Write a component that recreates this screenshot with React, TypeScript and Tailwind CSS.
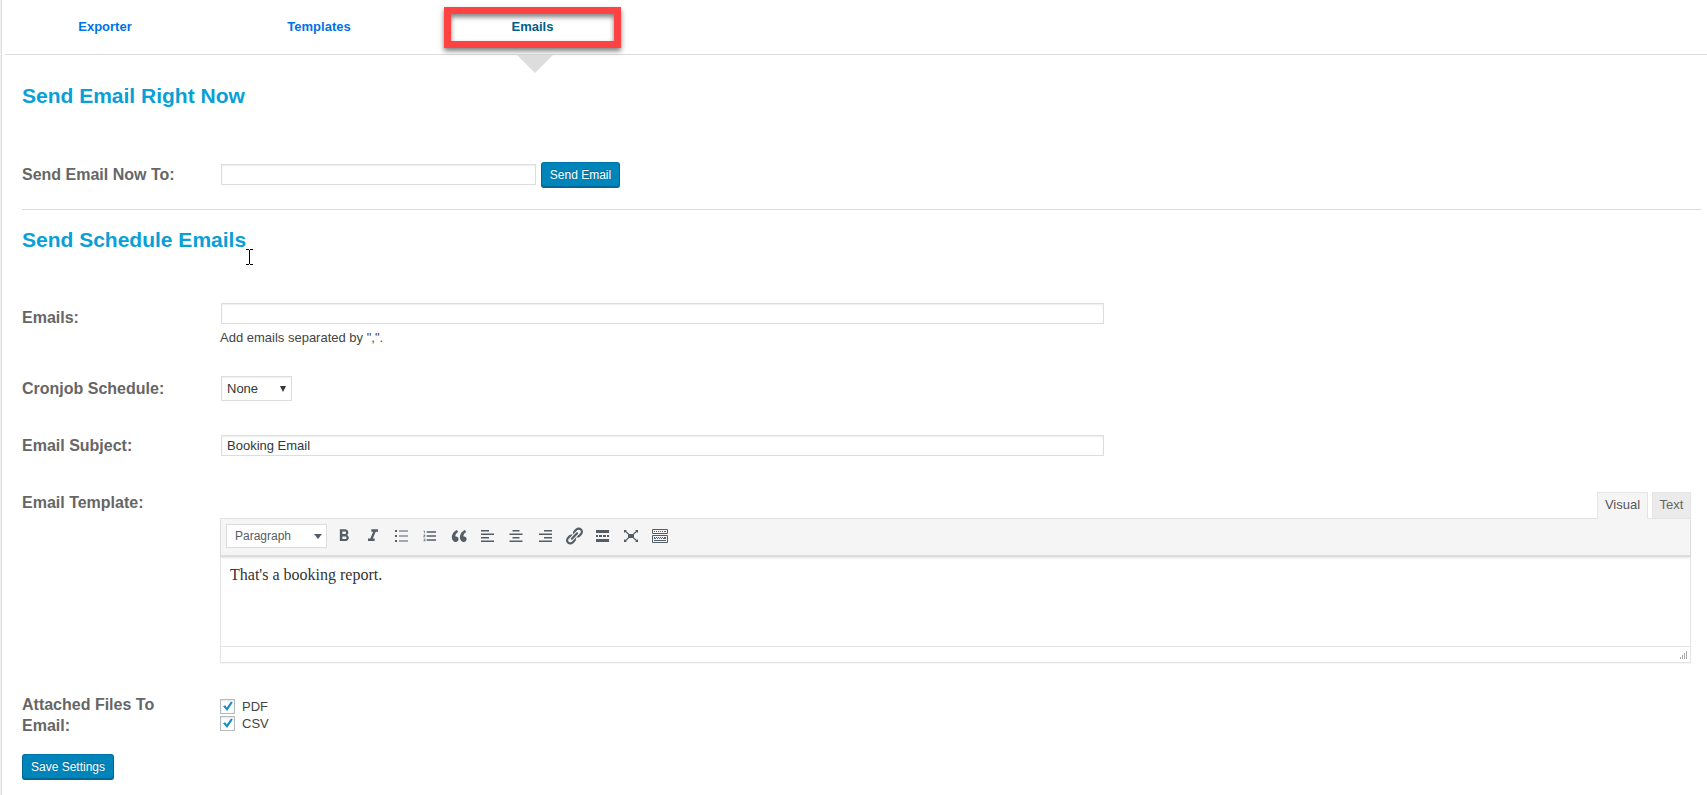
import type { ReactNode } from "react";
import clsx from "clsx";
import { MdFormatBold, MdFormatItalic, MdFormatListNumbered } from "react-icons/md";

const TABS = ["Exporter", "Templates", "Emails"];
const ACTIVE_TAB = "Emails";

const inputClass =
  "h-[21px] border border-[#ddd] bg-white px-[5px] text-[13px] text-[#32373c] shadow-[inset_0_1px_2px_rgba(0,0,0,0.07)] outline-none";

const buttonClass =
  "h-[26px] rounded-[3px] border border-[#006799] border-t-[#0073aa] bg-[#0085ba] text-xs text-white shadow-[inset_0_-1px_0_#006799] [text-shadow:0_-1px_1px_#006799]";

/* ---------- Toolbar icons ---------- */

function Icon({ children }: { children: ReactNode }) {
  return (
    <svg viewBox="0 0 20 20" className="size-5" fill="currentColor" aria-hidden="true">
      {children}
    </svg>
  );
}

function BulletsIcon() {
  return (
    <Icon>
      <path d="M4 4h2v2H4zM4 9h2v2H4zM4 14h2v2H4z" />
      <path d="M8 4.5h9v1H8zM8 9.5h9v1H8zM8 14.5h9v1H8z" />
    </Icon>
  );
}

function QuoteIcon() {
  return (
    <Icon>
      <path d="M9.49 13.22c0-.74-.2-1.38-.61-1.9-.62-.78-1.83-.88-2.53-.72-.29-1.65 1.11-3.75 2.92-4.65L7.88 4c-2.73 1.3-5.42 4.28-4.96 8.05C3.21 14.43 4.59 16 6.54 16c.85 0 1.56-.25 2.12-.75s.83-1.18.83-2.03zm8.05 0c0-.74-.2-1.38-.61-1.9-.63-.78-1.83-.88-2.53-.72-.29-1.65 1.11-3.75 2.92-4.65L15.93 4c-2.73 1.3-5.41 4.28-4.95 8.05.29 2.38 1.66 3.95 3.61 3.95.85 0 1.56-.25 2.12-.75s.83-1.18.83-2.03z" />
    </Icon>
  );
}

function AlignLeftIcon() {
  return (
    <Icon>
      <path d="M3 4h8v1.4H3zM3 7.5h13v1.4H3zM3 11h8v1.4H3zM3 14.6h13V16H3z" />
    </Icon>
  );
}

function AlignCenterIcon() {
  return (
    <Icon>
      <path d="M6.5 4h7v1.4h-7zM3.5 7.5h13v1.4h-13zM6.5 11h7v1.4h-7zM3.5 14.6h13V16h-13z" />
    </Icon>
  );
}

function AlignRightIcon() {
  return (
    <Icon>
      <path d="M9 4h8v1.4H9zM4 7.5h13v1.4H4zM9 11h8v1.4H9zM4 14.6h13V16H4z" />
    </Icon>
  );
}

function LinkIcon() {
  return (
    <Icon>
      <path d="M17.74 2.76c1.68 1.69 1.68 4.41 0 6.1l-1.53 1.52c-1.12 1.12-2.7 1.47-4.14 1.09l2.62-2.61.76-.77.76-.76c.84-.84.84-2.2 0-3.04-.84-.85-2.2-.85-3.04 0l-.77.76-3.38 3.38c-.37-1.44-.02-3.02 1.1-4.14l1.52-1.53c1.69-1.68 4.42-1.68 6.1 0zM8.59 13.43l5.34-5.34c.42-.42.42-1.1 0-1.52-.44-.43-1.13-.39-1.53 0l-5.33 5.34c-.42.42-.42 1.1 0 1.52.44.43 1.13.39 1.52 0zm-.76 2.29l4.14-4.15c.38 1.44.03 3.02-1.09 4.14l-1.52 1.53c-1.69 1.68-4.41 1.68-6.1 0-1.68-1.68-1.68-4.42 0-6.1l1.53-1.52c1.12-1.12 2.7-1.47 4.14-1.1l-4.14 4.15c-.85.84-.85 2.2 0 3.05.84.84 2.2.84 3.04 0z" />
    </Icon>
  );
}

function ReadMoreIcon() {
  return (
    <Icon>
      <path d="M4 4h13v3H4zM4 13h13v3H4z" />
      <path d="M4 9h2v2H4zM7 9h3v2H7zM11 9h3v2h-3zM15 9h2v2h-2z" />
    </Icon>
  );
}

function ExpandIcon() {
  return (
    <Icon>
      <path d="M7 8h6v4H7z" />
      <path
        d="M4 5l3.5 3M16 5l-3.5 3M4 15l3.5-3M16 15l-3.5-3"
        fill="none"
        stroke="currentColor"
        strokeWidth="1.2"
      />
      <path d="M3 4h3L3 7zM17 4h-3l3 3zM3 16h3l-3-3zM17 16h-3l3-3z" />
    </Icon>
  );
}

function KeyboardIcon() {
  return (
    <Icon>
      <path
        d="M2.5 3.5h15v4h-15zM2.5 9.5h15v7h-15z"
        fill="none"
        stroke="currentColor"
      />
      <path d="M4 5h1v1H4zM6 5h1v1H6zM8 5h1v1H8zM10 5h1v1h-1zM12 5h1v1h-1zM14 5h2v1h-2z" />
      <path d="M4 11h1v1H4zM6 11h1v1H6zM8 11h1v1H8zM10 11h1v1h-1zM12 11h1v1h-1zM14 11h2v1h-2z" />
      <path d="M4 12h2v1H4zM7 12h1v1H7zM9 12h1v1H9zM11 12h1v1h-1zM13 12h3v1h-3zM4 14h12v1H4z" />
    </Icon>
  );
}

const TOOLS: { label: string; icon: ReactNode }[] = [
  { label: "Bold", icon: <MdFormatBold className="size-5" /> },
  { label: "Italic", icon: <MdFormatItalic className="size-5" /> },
  { label: "Bulleted list", icon: <BulletsIcon /> },
  { label: "Numbered list", icon: <MdFormatListNumbered className="size-4" /> },
  { label: "Blockquote", icon: <QuoteIcon /> },
  { label: "Align left", icon: <AlignLeftIcon /> },
  { label: "Align center", icon: <AlignCenterIcon /> },
  { label: "Align right", icon: <AlignRightIcon /> },
  { label: "Insert link", icon: <LinkIcon /> },
  { label: "Read more", icon: <ReadMoreIcon /> },
  { label: "Fullscreen", icon: <ExpandIcon /> },
  { label: "Toolbar toggle", icon: <KeyboardIcon /> },
];

/* ---------- Form parts ---------- */

function Row({
  label,
  htmlFor,
  className,
  labelClassName,
  children,
}: {
  label: string;
  htmlFor: string;
  className?: string;
  labelClassName?: string;
  children: ReactNode;
}) {
  return (
    <div className={clsx("grid grid-cols-[198px_1fr] pr-[10px]", className)}>
      <label
        htmlFor={htmlFor}
        className={clsx(
          "max-w-40 text-base leading-[21px] font-bold text-[#666]",
          labelClassName
        )}
      >
        {label}
      </label>
      {children}
    </div>
  );
}

function Heading({ children }: { children: ReactNode }) {
  return <h2 className="text-[21px] leading-7 font-bold text-[#08a0d6]">{children}</h2>;
}

function Checkbox({ id, label }: { id: string; label: string }) {
  return (
    <label htmlFor={id} className="flex h-[17px] items-center gap-[7px] text-[13px] text-[#444]">
      <span className="grid">
        <input
          id={id}
          type="checkbox"
          defaultChecked
          className="peer col-start-1 row-start-1 size-[15px] appearance-none border border-[#b4b9be] bg-white shadow-[inset_0_1px_2px_rgba(0,0,0,0.1)]"
        />
        <svg
          viewBox="0 0 15 15"
          className="pointer-events-none invisible col-start-1 row-start-1 size-[15px] peer-checked:visible"
          aria-hidden="true"
        >
          <path d="M3 7.3l2.2-1 1.6 2.1L11 2.6l1.8.9L7.1 12z" fill="#1e8cbe" />
        </svg>
      </span>
      {label}
    </label>
  );
}

function Editor() {
  return (
    <div>
      <div className="flex justify-end gap-1 text-[13px] leading-[22px]">
        <button
          type="button"
          className="z-10 -mb-px h-[27px] w-[51px] border border-b-0 border-[#e5e5e5] bg-[#f5f5f5] pb-[3px] text-[#555]"
        >
          Visual
        </button>
        <button
          type="button"
          className="h-[26px] w-[39px] border border-b-0 border-[#e5e5e5] bg-[#ebebeb] pb-[2px] text-[#666]"
        >
          Text
        </button>
      </div>

      <div className="border border-[#e5e5e5] shadow-[0_1px_1px_rgba(0,0,0,0.04)]">
        <div className="flex h-[38px] items-center border-b-2 border-[#ddd] bg-[#f5f5f5] pb-[2px] pl-[5px] text-[#555d66] shadow-[0_1px_2px_rgba(0,0,0,0.12)]">
          <div className="grid w-[101px] items-center">
            <select
              aria-label="Text style"
              className="col-start-1 row-start-1 h-6 w-full appearance-none border border-[#ddd] bg-white px-2 text-xs text-[#555d66]"
            >
              <option>Paragraph</option>
            </select>
            <svg
              viewBox="0 0 8 5"
              className="pointer-events-none col-start-1 row-start-1 mr-[5px] h-[5px] w-2 justify-self-end"
              aria-hidden="true"
            >
              <path d="M0 0h8L4 5z" fill="#555d66" />
            </svg>
          </div>
          <div className="ml-[3px] flex w-[344px] justify-between">
            {TOOLS.map((tool) => (
              <button
                key={tool.label}
                type="button"
                aria-label={tool.label}
                className="flex size-7 items-center justify-center"
              >
                {tool.icon}
              </button>
            ))}
          </div>
        </div>
        <textarea
          id="template"
          defaultValue="That's a booking report."
          className="block h-[89px] w-full resize-none px-[9px] py-[6px] font-['Liberation_Serif',serif] text-base leading-6 text-[#333] outline-none"
        />
        <div className="flex h-4 items-end justify-end border-t border-[#e5e5e5] p-[2px]">
          <svg viewBox="0 0 9 9" className="size-[9px]" fill="#aaa" aria-hidden="true">
            <path d="M7 0h1v8H7zM5 2h1v6H5zM3 4h1v4H3zM1 6h1v2H1z" />
          </svg>
        </div>
      </div>
    </div>
  );
}

/* ---------- Page ---------- */

export default function App() {
  return (
    <div className="flex min-h-screen bg-[#f1f1f1] pl-px font-['Liberation_Sans',Arial,sans-serif]">
      <main className="grow border-l border-[#ddd] bg-white pb-4">
        <nav className="ml-[3px] border-b border-[#ddd]">
          <ul className="flex h-[54px] gap-[14px] text-[13px] font-bold">
            {TABS.map((tab) => {
              const active = tab === ACTIVE_TAB;
              return (
                <li key={tab} className="relative w-[200px] pt-[7px]">
                  <a
                    href="#"
                    className={clsx(
                      "flex items-center justify-center",
                      active
                        ? "mr-3 ml-[11px] h-[41px] border-[7px] border-[#ff4343] pb-[2px] text-[#016087] shadow-[0_3px_5px_rgba(0,0,0,0.5),inset_0_3px_5px_rgba(0,0,0,0.5)]"
                        : "h-10 text-[#0073e6]"
                    )}
                  >
                    {tab}
                  </a>
                  {active && (
                    <svg
                      viewBox="0 0 36 18"
                      className="absolute top-[55px] left-[84px] h-[18px] w-9"
                      aria-hidden="true"
                    >
                      <path d="M0 0h36L18 18z" fill="#ddd" />
                    </svg>
                  )}
                </li>
              );
            })}
          </ul>
        </nav>

        <div className="pt-[27px] pr-[6px] pl-5">
          <section className="border-b border-[#ddd] pb-[21px]">
            <Heading>Send Email Right Now</Heading>
            <Row
              label="Send Email Now To:"
              htmlFor="send-to"
              className="mt-[52px] items-start"
              labelClassName="pt-[2px]"
            >
              <div className="flex items-start gap-[5px] pl-px">
                <input id="send-to" type="text" className={clsx(inputClass, "mt-[2px] w-[315px]")} />
                <button type="button" className={clsx(buttonClass, "w-[79px]")}>
                  Send Email
                </button>
              </div>
            </Row>
          </section>

          <section className="pt-4">
            {/* Text cursor resting just past the heading */}
            <div className="relative">
              <Heading>Send Schedule Emails</Heading>
              <svg
                viewBox="0 0 7 16"
                className="absolute top-[23px] left-[224px] h-4 w-[7px]"
                fill="none"
                stroke="#000"
                aria-hidden="true"
              >
                <path d="M0 .5h3M4 .5h3M3.5 1v14M0 15.5h3M4 15.5h3" />
              </svg>
            </div>

            <Row
              label="Emails:"
              htmlFor="emails"
              className="mt-[49px] items-start"
              labelClassName="pt-1"
            >
              <div>
                <input id="emails" type="text" className={clsx(inputClass, "ml-px block w-3/5")} />
                <p className="mt-[5px] text-[13px] leading-[18px] text-[#444]">
                  Add emails separated by ",".
                </p>
              </div>
            </Row>

            <Row label="Cronjob Schedule:" htmlFor="schedule" className="mt-[29px] items-center">
              <div className="ml-px grid w-[71px] items-center">
                <select
                  id="schedule"
                  className="col-start-1 row-start-1 h-[25px] w-full appearance-none border border-[#ddd] bg-white px-[5px] text-[13px] text-[#32373c] shadow-[inset_0_1px_2px_rgba(0,0,0,0.07)]"
                >
                  <option>None</option>
                </select>
                <svg
                  viewBox="0 0 6 6"
                  className="pointer-events-none col-start-1 row-start-1 mr-[6px] size-[6px] justify-self-end"
                  aria-hidden="true"
                >
                  <path d="M0 0h6L3 6z" fill="#32373c" />
                </svg>
              </div>
            </Row>

            <Row label="Email Subject:" htmlFor="subject" className="mt-[34px] items-center">
              <div>
                <input
                  id="subject"
                  type="text"
                  defaultValue="Booking Email"
                  className={clsx(inputClass, "ml-px block w-3/5")}
                />
              </div>
            </Row>

            <Row label="Email Template:" htmlFor="template" className="mt-9 items-start">
              <Editor />
            </Row>

            <Row label="Attached Files To Email:" htmlFor="pdf" className="mt-[31px] items-start">
              <div className="pt-1">
                <Checkbox id="pdf" label="PDF" />
                <Checkbox id="csv" label="CSV" />
              </div>
            </Row>

            <button type="button" className={clsx(buttonClass, "mt-[18px] w-[92px]")}>
              Save Settings
            </button>
          </section>
        </div>
      </main>
    </div>
  );
}
